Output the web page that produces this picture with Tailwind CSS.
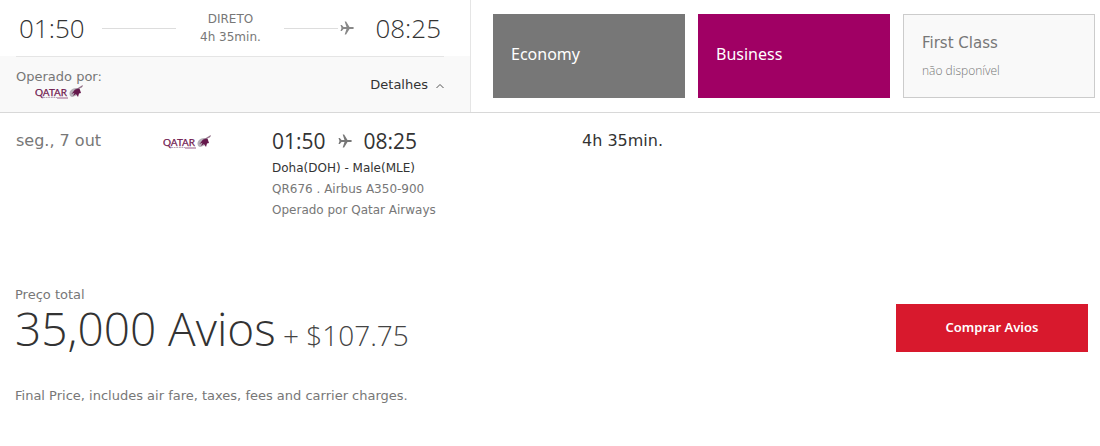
<!DOCTYPE html>
<html lang="pt">
<head>
<meta charset="utf-8">
<meta name="viewport" content="width=device-width, initial-scale=1">
<title>Voo Doha - Male</title>
<script src="https://cdn.jsdelivr.net/npm/@tailwindcss/browser@4"></script>
</head>
<body class="bg-white font-['DejaVu_Sans',sans-serif] text-[#777]">
<svg class="hidden" aria-hidden="true">
  <symbol id="plane" viewBox="0 0 14 14"><path d="M.5 4h1.300L3.500 6h3L4.700.5h1.400L9.500 6h2.800c1 0 1.600.5 1.600 1s-.6 1-1.600 1H9.500l-3.400 5.500H4.700L6.500 8h-3L1.800 10H.5L1.500 7z"/></symbol>
  <symbol id="qatar" viewBox="0 0 50 15">
    <text x="0" y="10.500" font-family="Lato, sans-serif" font-size="10" fill="#70184f" stroke="#70184f" stroke-width=".25">QATAR</text>
    <path d="M8 12.500h14" fill="none" stroke="#b9a9b9" stroke-width="1" stroke-dasharray="2 .6"/>
    <path d="M22 13h11" fill="none" stroke="#a9779b" stroke-width="1.200"/>
    <path d="M44 3.500C39 1.500 34.500 5 34.500 8.500c0 2 1 3.500 3 3.500l5-2z" fill="#b5b0b8"/>
    <path d="M47.500.5L41 4.500 47 2z" fill="#8a6680" stroke="#8a6680" stroke-width=".5"/>
    <path d="M44.500 3.500L40 4.500 36.500 9l3-1.200-1.500 3.200 3-2L43 12l1-3.500 2-.5-1-3z" fill="#65194c"/>
  </symbol>
</svg>
<header class="flex border-b border-[#d8d8d8]">
  <section class="w-[471px] shrink-0 border-r border-[#e5e5e5]">
    <div class="flex h-14 items-center pl-[19px] pr-[29px]">
      <time class="font-['Open_Sans'] text-[26px] font-light leading-8 text-[#333]">01:50</time>
      <span class="ml-[17px] h-px flex-1 bg-[#ddd]"></span>
      <p class="w-[108px] text-center text-[12px] leading-[18px]">DIRETO<br>4h 35min.</p>
      <span class="h-px w-[54px] bg-[#ddd]"></span>
      <svg class="ml-0.5 size-3.5 fill-[#888]" aria-hidden="true"><use href="#plane"/></svg>
      <time class="ml-[21px] font-['Open_Sans'] text-[26px] font-light leading-8 text-[#333]">08:25</time>
    </div>
    <div class="h-14 bg-[#f9f9f9] pl-4 pr-[26px]">
      <div class="flex h-full items-center justify-between border-t border-[#e5e5e5]">
        <div>
          <p class="text-[13px] leading-4">Operado por:</p>
          <svg class="ml-[19px] h-[15px] w-[50px]" role="img" aria-label="Qatar"><use href="#qatar"/></svg>
        </div>
        <button class="flex items-center gap-2 text-[13px] text-[#333]">Detalhes
          <svg class="size-2 fill-none stroke-[#555]" viewBox="0 0 8 8"><path d="M.5 7L4 3.500 7.500 7"/></svg>
        </button>
      </div>
    </div>
  </section>
  <section class="grid flex-1 grid-cols-3 gap-[13px] pb-3.5 pl-[22px] pr-[5px] pt-3.5 text-left text-base">
    <button class="h-[84px] bg-[#777] px-[18px] pb-1 text-left font-['Noto_Sans'] text-white">Economy</button>
    <button class="h-[84px] bg-[#a00064] px-[18px] pb-1 text-left font-['Noto_Sans'] text-white">Business</button>
    <button disabled class="flex h-[84px] flex-col border border-[#ccc] bg-[#f9f9f9] px-[18px] pt-4 text-left">
      <span class="text-[15px] leading-6">First Class</span>
      <span class="mt-1.5 font-['Open_Sans'] text-[12px] font-light leading-5">não disponível</span>
    </button>
  </section>
</header>
<main>
  <section class="flex pt-4">
    <p class="w-[163px] pl-4 text-base">seg., 7 out</p>
    <div class="w-[109px] pt-1.5"><svg class="h-[15px] w-[50px]" role="img" aria-label="Qatar"><use href="#qatar"/></svg></div>
    <div class="w-[310px] text-[12px] leading-[21px]">
      <p class="mb-[5px] flex items-center font-['Open_Sans'] text-[21px] leading-6 text-[#333]"><time>01:50</time><svg class="mx-3 size-3.5 fill-[#777]" aria-hidden="true"><use href="#plane"/></svg><time>08:25</time></p>
      <p class="text-[#333]">Doha(DOH) - Male(MLE)</p>
      <p>QR676 . Airbus A350-900</p>
      <p>Operado por Qatar Airways</p>
    </div>
    <p class="text-base text-[#333]">4h 35min.</p>
  </section>
  <section class="flex items-start justify-between pl-[15px] pr-3 pt-[66px]">
    <div>
      <p class="text-[13px] leading-4">Preço total</p>
      <p class="font-['Open_Sans'] text-[28px] font-light leading-[50px] text-[#444]"><span class="text-[46px] text-[#333]">35,000 Avios</span> + $107.75</p>
      <p class="mt-[26px] text-[13px] leading-5">Final Price, includes air fare, taxes, fees and carrier charges.</p>
    </div>
    <button class="mt-[17px] h-12 w-48 bg-[#d8192d] font-['Noto_Sans'] text-[13px] font-semibold text-white">Comprar Avios</button>
  </section>
</main>
</body>
</html>
